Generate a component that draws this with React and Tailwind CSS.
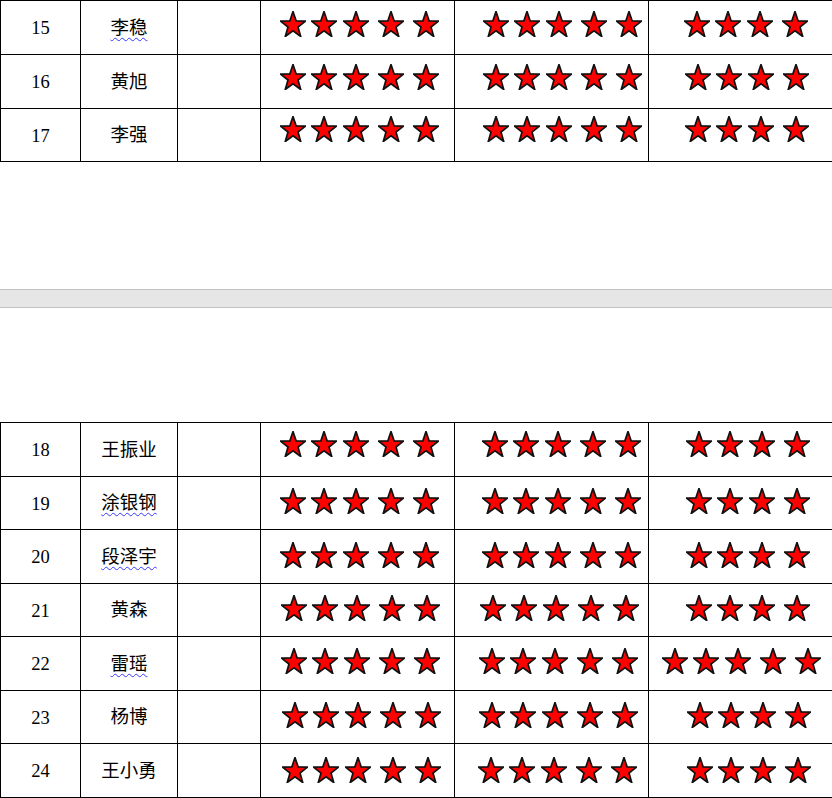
import React from "react";

const font = { fontFamily: '"Liberation Serif", "Noto Sans CJK SC", serif' };

// per-row offsets read off the reference (stars sit a little high in most rows)
const top = [
  { no: 15, name: "李稳", wavy: true, h: "h-[54px]", pb: "pb-[8px]", p4: "pl-[19px]", p5: "pl-[28px]", p6: "pl-[35px]", n6: 4 },
  { no: 16, name: "黄旭", h: "h-[54px]", pb: "pb-[10px]", p4: "pl-[19px]", p5: "pl-[28px]", p6: "pl-[36px]", n6: 4 },
  { no: 17, name: "李强", h: "h-[53px]", pb: "pb-[12px]", p4: "pl-[19px]", p5: "pl-[28px]", p6: "pl-[36px]", n6: 4 },
];

const bottom = [
  { no: 18, name: "王振业", h: "h-[54px]", pb: "pb-[12px]", p4: "pl-[19px]", p5: "pl-[27px]", p6: "pl-[37px]", n6: 4 },
  { no: 19, name: "涂银钢", wavy: true, h: "h-[53px]", pb: "pb-[4px]", p4: "pl-[19px]", p5: "pl-[27px]", p6: "pl-[37px]", n6: 4 },
  { no: 20, name: "段泽宇", wavy: true, h: "h-[54px]", pb: "pb-[4px]", p4: "pl-[19px]", p5: "pl-[27px]", p6: "pl-[37px]", n6: 4 },
  { no: 21, name: "黄森", h: "h-[53px]", pb: "pb-[4px]", p4: "pl-[20px]", p5: "pl-[25px]", p6: "pl-[37px]", n6: 4 },
  { no: 22, name: "雷瑶", wavy: true, h: "h-[54px]", pb: "pb-[6px]", p4: "pl-[20px]", p5: "pl-[24px]", p6: "pl-[13px]", n6: 5 },
  { no: 23, name: "杨博", h: "h-[53px]", pb: "pb-[4px]", p4: "pl-[21px]", p5: "pl-[24px]", p6: "pl-[38px]", n6: 4 },
  { no: 24, name: "王小勇", h: "h-[54px]", pb: "pb-[2px]", p4: "pl-[21px]", p5: "pl-[23px]", p6: "pl-[38px]", n6: 4 },
];

const gaps = ["", "ml-[5px]", "ml-[6px]", "ml-[9px]", "ml-[9px]"];

function Star({ className }) {
  return (
    <svg
      width="26"
      height="26"
      viewBox="-2 -2 104 104"
      preserveAspectRatio="none"
      className={"shrink-0 " + className}
    >
      <polygon
        points="50,0 62.4,37.4 100,38.2 70,62.1 80.9,100 50,77.4 19.1,100 30,62.1 0,38.2 37.6,37.4"
        fill="#ff0000"
        stroke="#111"
        strokeWidth="1.7"
        strokeLinejoin="miter"
        vectorEffect="non-scaling-stroke"
      />
    </svg>
  );
}

function Stars({ count, pad, pb, width }) {
  return (
    <div className={`flex items-center border-r border-black ${width} ${pad} ${pb}`}>
      {Array.from({ length: count }).map((_, i) => (
        <Star key={i} className={gaps[i]} />
      ))}
    </div>
  );
}

function Row({ r }) {
  return (
    <div className={`flex border-b border-black ${r.h}`}>
      <div className="w-[80px] shrink-0 border-r border-black flex items-center justify-center pt-[3px] text-[18.5px]">
        {r.no}
      </div>
      <div className="w-[97px] shrink-0 border-r border-black flex items-center justify-center pt-[2px] text-[18.5px]">
        <span
          className={
            r.wavy
              ? "underline decoration-wavy decoration-[#3535ff] decoration-1 underline-offset-[3px]"
              : ""
          }
        >
          {r.name}
        </span>
      </div>
      <div className="w-[83px] shrink-0 border-r border-black" />
      <Stars count={5} pad={r.p4} pb={r.pb} width="w-[194px] shrink-0" />
      <Stars count={5} pad={r.p5} pb={r.pb} width="w-[194px] shrink-0" />
      <Stars count={r.n6} pad={r.p6} pb={r.pb} width="w-[250px] shrink-0" />
    </div>
  );
}

export default function App() {
  return (
    <div className="w-[832px] h-[798px] overflow-hidden bg-white text-black" style={font}>
      <div className="w-[1000px] border-t border-l border-black">
        {top.map((r) => (
          <Row key={r.no} r={r} />
        ))}
      </div>

      {/* page break */}
      <div className="mt-[127px] h-[19px] border-y border-[#c3c3c3] bg-[#e6e6e6]" />

      <div className="mt-[114px] w-[1000px] border-t border-l border-black">
        {bottom.map((r) => (
          <Row key={r.no} r={r} />
        ))}
      </div>
    </div>
  );
}
